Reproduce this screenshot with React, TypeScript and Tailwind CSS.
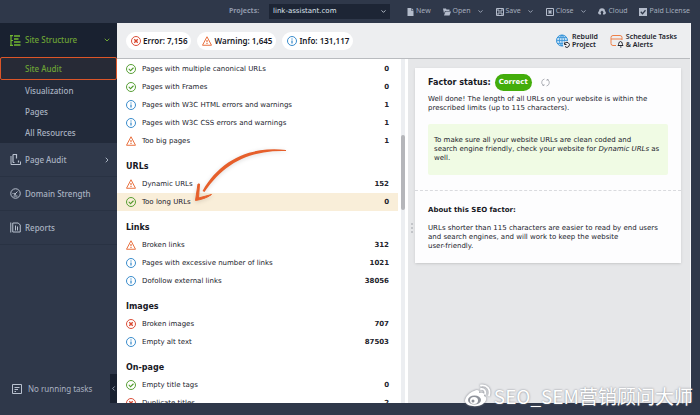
import React from "react";
import { ChevronDown, ChevronLeft, ChevronRight } from "lucide-react";

type Status = "ok" | "info" | "warning" | "error";

function StatusIcon({ status, size = 10 }: { status: Status; size?: number }) {
  if (status === "warning") {
    return (
      <svg width={size} height={size} viewBox="0 0 20 20" fill="none" stroke="#e8703f" strokeWidth="2" strokeLinejoin="round" className="shrink-0">
        <path d="M10 1.500 19 18.500H1Z" />
        <path d="M10 8v4.500M10 14v2" strokeWidth="2.400" />
      </svg>
    );
  }
  const color = status === "ok" ? "#4f9a2a" : status === "info" ? "#2f86c8" : "#d9472f";
  return (
    <svg width={size} height={size} viewBox="0 0 20 20" fill="none" stroke={color} strokeWidth="1.900" className="shrink-0">
      <circle cx="10" cy="10" r="9" />
      {status === "ok" && <path d="m5.500 9.500 3.500 4 6-6" strokeWidth="2.200" />}
      {status === "info" && <path d="M10 9v6M10 5v2.200" strokeWidth="2.400" />}
      {status === "error" && <path d="m6.500 6.500 7 7M13.500 6.500l-7 7" strokeWidth="2.800" />}
    </svg>
  );
}

type Row = { status: Status; label: string; count: string; selected?: boolean };
type Group = { title?: string; rows: Row[] };

const groups: Group[] = [
  {
    rows: [
      { status: "ok", label: "Pages with multiple canonical URLs", count: "0" },
      { status: "ok", label: "Pages with Frames", count: "0" },
      { status: "info", label: "Pages with W3C HTML errors and warnings", count: "1" },
      { status: "info", label: "Pages with W3C CSS errors and warnings", count: "1" },
      { status: "warning", label: "Too big pages", count: "1" },
    ],
  },
  {
    title: "URLs",
    rows: [
      { status: "warning", label: "Dynamic URLs", count: "152" },
      { status: "ok", label: "Too long URLs", count: "0", selected: true },
    ],
  },
  {
    title: "Links",
    rows: [
      { status: "warning", label: "Broken links", count: "312" },
      { status: "info", label: "Pages with excessive number of links", count: "1021" },
      { status: "info", label: "Dofollow external links", count: "38056" },
    ],
  },
  {
    title: "Images",
    rows: [
      { status: "error", label: "Broken images", count: "707" },
      { status: "info", label: "Empty alt text", count: "87503" },
    ],
  },
  {
    title: "On-page",
    rows: [
      { status: "ok", label: "Empty title tags", count: "0" },
      { status: "error", label: "Duplicate titles", count: "2" },
    ],
  },
];

function FileIcon() {
  return (
    <svg width="7" height="8" viewBox="0 0 14 16" fill="#b4bccb" className="shrink-0">
      <path d="M1 0h7v5h5v11H1Z" />
      <path d="m9 0 4 4H9Z" />
    </svg>
  );
}

function FolderIcon() {
  return (
    <svg width="8" height="8" viewBox="0 0 16 16" fill="#b4bccb" className="shrink-0">
      <path d="M0 1h6l1 2h6v3H4L2 11Z" />
      <path d="M5 7h11l-3 8H2Z" />
    </svg>
  );
}

function SaveIcon() {
  return (
    <svg width="8" height="8" viewBox="0 0 16 16" fill="none" stroke="#b4bccb" strokeWidth="2" className="shrink-0">
      <path d="M1 1h14v14H1ZM4 1v5h8V1M4 15v-5h8v5" />
    </svg>
  );
}

function CloseIcon() {
  return (
    <svg width="8" height="8" viewBox="0 0 16 16" fill="none" stroke="#b4bccb" strokeWidth="2" className="shrink-0">
      <path d="M1 1h14v14H1Z" />
      <path d="m5 5 6 6M11 5l-6 6" strokeWidth="3" />
    </svg>
  );
}

function CloudIcon() {
  return (
    <svg width="8" height="7" viewBox="0 0 16 14" fill="#b4bccb" className="shrink-0">
      <path d="M3 13a3.500 3.500 0 0 1-1-6.500A6 6 0 0 1 14 6.500 3.500 3.500 0 0 1 13 13h-3V9h2L8 5 4 9h2v4Z" />
    </svg>
  );
}

function LicenseIcon() {
  return (
    <svg width="8" height="8" viewBox="0 0 16 16" className="shrink-0">
      <path d="M0 0h16v16H0Z" fill="#b4bccb" />
      <path d="m3.500 7.500 3.500 4 6-7" fill="none" stroke="#2f384a" strokeWidth="2.400" />
    </svg>
  );
}

function ToolButton({ icon, label, menu }: { icon: React.ReactNode; label: string; menu?: boolean }) {
  return (
    <button type="button" className="flex items-center gap-[2px] whitespace-nowrap font-['Noto_Sans',sans-serif] text-[7px] text-[#a4adbd]">
      {icon}
      <span>{label}</span>
      {menu && <ChevronDown size={7} strokeWidth={3} className="ml-1" />}
    </button>
  );
}

function TopBar() {
  return (
    <header className="flex h-[23px] shrink-0 items-center bg-[#2f384a] pr-[10px]">
      <label htmlFor="project" className="ml-[229px] w-10 whitespace-nowrap font-['Noto_Sans',sans-serif] text-[7px] font-bold text-[#8f99ab]">
        Projects:
      </label>
      <div className="grid w-[121px] items-center">
        <select id="project" className="col-start-1 row-start-1 h-[15px] appearance-none bg-[#1d2535] pl-1 text-[7px] text-[#dfe4ec]">
          <option>link-assistant.com</option>
        </select>
        <ChevronDown size={7} strokeWidth={3} className="pointer-events-none col-start-1 row-start-1 mr-[3px] justify-self-end text-[#c3cad6]" />
      </div>
      <nav className="ml-[17px] flex flex-1 items-center justify-between">
        <ToolButton icon={<FileIcon />} label="New" />
        <ToolButton icon={<FolderIcon />} label="Open" menu />
        <ToolButton icon={<SaveIcon />} label="Save" menu />
        <ToolButton icon={<CloseIcon />} label="Close" menu />
        <ToolButton icon={<CloudIcon />} label="Cloud" />
        <ToolButton icon={<LicenseIcon />} label="Paid License" />
      </nav>
    </header>
  );
}

const subPages = ["Visualization", "Pages", "All Resources"];

function StructureIcon() {
  return (
    <svg width="11" height="11" viewBox="0 0 22 22" fill="none" stroke="#72b831" strokeWidth="2.400" className="shrink-0">
      <path d="M0 1.200h6M2 1v19.800M0 20.800h6M2 11h4" />
      <path d="M8 2h12M8 8h9M8 14h13M8 20h13" strokeWidth="3" />
    </svg>
  );
}

function PageAuditIcon() {
  return (
    <svg width="11" height="11" viewBox="0 0 22 22" fill="none" stroke="#b9c1cf" strokeWidth="2" className="shrink-0">
      <path d="M2 4v17h19v-6" />
      <path d="M6 1h7v8M6 1v16M6 17h3M17 13v4" strokeWidth="2.400" />
    </svg>
  );
}

function StrengthIcon() {
  return (
    <svg width="11" height="11" viewBox="0 0 22 22" fill="none" stroke="#b9c1cf" strokeWidth="2" className="shrink-0">
      <circle cx="11" cy="11" r="9.500" />
      <path d="m10 12 5-5M5 11h2M7 16h8" />
      <circle cx="10" cy="12" r="1.500" />
    </svg>
  );
}

function ReportsIcon() {
  return (
    <svg width="11" height="11" viewBox="0 0 22 22" fill="none" stroke="#b9c1cf" strokeWidth="2" className="shrink-0">
      <path d="M1.500 1v20M5.500 2h11l4 4v14h-15Z" />
      <path d="M11 7v10M15 9v8" />
    </svg>
  );
}

function SideItem({ icon, label, more }: { icon: React.ReactNode; label: string; more?: boolean }) {
  return (
    <button type="button" className="flex h-[34px] w-full items-center gap-1 border-b border-[#293243] pl-[10px] pr-[6px] text-left font-medium text-[#a9b2c1]">
      {icon}
      <span className="flex-1 whitespace-nowrap">{label}</span>
      {more && <ChevronRight size={8} strokeWidth={3} />}
    </button>
  );
}

function Sidebar() {
  return (
    <aside className="flex w-[117px] shrink-0 flex-col bg-[#2f384a] font-['Noto_Sans',sans-serif] text-[8px]">
      <div className="bg-[#222a3a]">
        <button type="button" className="flex h-[34px] w-full items-center gap-1 bg-[#192130] pl-[10px] pr-[6px] text-left font-medium text-[#6da335]">
          <StructureIcon />
          <span className="flex-1 whitespace-nowrap">Site Structure</span>
          <ChevronDown size={8} strokeWidth={3} />
        </button>
        <a href="#audit" className="flex h-[23px] items-center rounded-[2px] border border-[#dc5528] bg-[#272a36] pl-6 font-medium text-[#6da335]">
          Site Audit
        </a>
        {subPages.map((page) => (
          <a key={page} href="#pages" className="flex h-[21px] items-center pl-[25px] font-medium text-[#a9b2c1]">
            {page}
          </a>
        ))}
      </div>
      <SideItem icon={<PageAuditIcon />} label="Page Audit" more />
      <SideItem icon={<StrengthIcon />} label="Domain Strength" />
      <SideItem icon={<ReportsIcon />} label="Reports" />
      <div className="mt-auto flex h-[29px] items-center pl-3 text-[#a9b2c1]">
        <svg width="10" height="10" viewBox="0 0 20 20" fill="none" stroke="#b9c1cf" strokeWidth="2" className="shrink-0">
          <path d="M1 1h18v18H1ZM5 7h10M5 11h7M5 15h3" />
        </svg>
        <span className="ml-[6px] flex-1 whitespace-nowrap">No running tasks</span>
        <button type="button" aria-label="Collapse sidebar" className="flex h-full w-[7px] items-center justify-center bg-[#192130]">
          <ChevronLeft size={7} strokeWidth={3} />
        </button>
      </div>
    </aside>
  );
}

function Pill({ status, label }: { status: Status; label: string }) {
  return (
    <button type="button" className="flex h-[18px] items-center gap-[2px] whitespace-nowrap rounded-full bg-white pl-[5px] pr-1 font-['Noto_Sans',sans-serif] text-[8px] font-semibold text-[#17181f]">
      <StatusIcon status={status} />
      {label}
    </button>
  );
}

function RebuildIcon() {
  return (
    <svg width="14" height="14" viewBox="0 0 28 28" fill="none" className="shrink-0">
      <circle cx="12" cy="13" r="11" stroke="#2f8fd6" strokeWidth="2" fill="#c4e0f5" />
      <path d="M12 2v22M1 13h22M3 7h18M3 19h18M12 2c-7 6-7 16 0 22M12 2c7 6 7 16 0 22" stroke="#2f8fd6" strokeWidth="1.500" />
      <circle cx="21" cy="21" r="7" fill="#eeeff1" />
      <path d="M17 17v4h4M17 20a5 5 0 1 1 1 5" stroke="#22242c" strokeWidth="2" />
    </svg>
  );
}

function ScheduleIcon() {
  return (
    <svg width="14" height="14" viewBox="0 0 28 28" fill="none" className="shrink-0">
      <path d="M12 23H6a4 4 0 0 1-4-4V7a4 4 0 0 1 4-4h14a4 4 0 0 1 4 4v5M2 10h22" stroke="#ee8048" strokeWidth="2" />
      <path d="M16 23c2-2 1-8 5-8s3 6 5 8Z" stroke="#22242c" strokeWidth="2" />
      <path d="M20 26h3" stroke="#22242c" strokeWidth="2" />
    </svg>
  );
}

function SummaryBar() {
  return (
    <div className="flex h-9 shrink-0 items-center border-b border-[#b9bbbf] bg-[#edeef0] pl-[9px] pr-[13px]">
      <div className="flex gap-[6px]">
        <Pill status="error" label="Error: 7,156" />
        <Pill status="warning" label="Warning: 1,645" />
        <Pill status="info" label="Info: 131,117" />
      </div>
      <div className="ml-auto flex gap-3 whitespace-nowrap font-['Noto_Sans',sans-serif] text-[7px] font-semibold leading-[8px] text-[#22242c]">
        <button type="button" className="flex items-center gap-[2px] text-left">
          <RebuildIcon />
          <span>Rebuild<br />Project</span>
        </button>
        <button type="button" className="flex items-center gap-[2px] text-left">
          <ScheduleIcon />
          <span>Schedule Tasks<br />&amp; Alerts</span>
        </button>
      </div>
    </div>
  );
}

function FactorList() {
  return (
    <section className="flex w-[291px] shrink-0 overflow-hidden bg-white">
      <div className="min-w-0 flex-1 pt-px">
        {groups.map((group, i) => (
          <div key={i}>
            {group.title && (
              <h2 className="flex h-[25px] items-end pb-[2px] pl-[9px] text-[8px] font-bold leading-[12px] text-[#17181f]">{group.title}</h2>
            )}
            <ul className="text-[7px] text-[#22232c]">
              {group.rows.map((row) => (
                <li key={row.label} className={row.selected ? "flex h-[18px] items-center bg-[#f9eed9] px-[9px]" : "flex h-[18px] items-center px-[9px]"}>
                  <StatusIcon status={row.status} />
                  <span className="ml-[6px] flex-1 whitespace-nowrap">{row.label}</span>
                  <span className="font-bold">{row.count}</span>
                </li>
              ))}
            </ul>
          </div>
        ))}
      </div>
      <div className="mx-[3px] w-1 bg-[#eceef1] pt-[76px]">
        <div className="h-[75px] rounded-full bg-[#b5b6ba]" />
      </div>
    </section>
  );
}

function FactorDetails() {
  return (
    <section className="flex min-w-0 flex-1 bg-[#e6e7e9]">
      <div className="flex w-[7px] shrink-0 flex-col items-center gap-[2px] pt-[164px]">
        <span className="size-[2px] bg-[#c3c5c9]" />
        <span className="size-[2px] bg-[#c3c5c9]" />
        <span className="size-[2px] bg-[#c3c5c9]" />
      </div>
      <div className="mr-[9px] mt-[9px] flex-1 self-start bg-[#fdfdfe] text-[7px] leading-[9px] text-[#22232c] shadow-sm">
        <div className="border-b border-dashed border-[#d9dade] px-[13px] pb-[15px] pt-[6px]">
          <div className="flex items-center">
            <h1 className="text-[8px] font-bold text-[#17181f]">Factor status:</h1>
            <span className="ml-1 flex h-[17px] items-center rounded-full bg-[#43ad0b] px-1 font-bold text-white">Correct</span>
            <button type="button" aria-label="Refresh" className="ml-[9px]">
              <svg width="9" height="9" viewBox="0 0 18 18" fill="none" stroke="#9b9ea5" strokeWidth="1.500">
                <path d="M7 2a7 7 0 0 0-2 13M3 15h3v-3M11 16a7 7 0 0 0 2-13M15 3h-3v3" />
              </svg>
            </button>
          </div>
          <p className="mt-1">
            Well done! The length of all URLs on your website is within the prescribed limits (up to 115 characters).
          </p>
          <p className="mt-[11px] rounded-[2px] bg-[#f0fbe4] px-[6px] py-3">
            To make sure all your website URLs are clean coded and
            <br />
            search engine friendly, check your website for <em>Dynamic URLs</em> as well.
          </p>
        </div>
        <div className="px-[13px] pb-3 pt-[15px]">
          <h2 className="font-bold text-[#17181f]">About this SEO factor:</h2>
          <p className="mt-[9px] pr-[6px]">
            URLs shorter than 115 characters are easier to read by end users and search engines, and will work to keep the website{" "}
            <span className="whitespace-nowrap">user-friendly.</span>
          </p>
        </div>
      </div>
    </section>
  );
}

function Arrow() {
  return (
    <svg width="100" height="60" viewBox="0 0 100 60" fill="#e65f2b" className="pointer-events-none absolute left-[190px] top-[145px] drop-shadow-sm">
      <path d="M96 5C60 1 30 15 12.500 46L14.500 47C34 18 60 5 96 6Z" />
      <path d="M8 39 5.500 55.500C11 54.500 17 53 21.500 49.500L8.500 53 9.500 39Z" stroke="#e65f2b" strokeWidth="1" strokeLinejoin="round" />
    </svg>
  );
}

function Watermark() {
  return (
    <div className="pointer-events-none absolute bottom-[7px] right-[7px] flex items-center gap-[3px] whitespace-nowrap font-['Noto_Sans_CJK_SC',sans-serif] text-[19px] leading-[24px] text-white [text-shadow:0_0_2px_#777b84]">
      <svg width="27" height="24" viewBox="0 0 27 24" className="shrink-0 drop-shadow-[0_0_1px_#777b84]">
        <path d="M10 7c3-2 6-1 5 2 4-1 6 0 5 3 3 1 3 4 0 7-5 5-18 4-19-2C1 13 6 8 10 7Z" fill="#fff" />
        <ellipse cx="10.500" cy="16" rx="6.500" ry="4.500" fill="#8e929a" />
        <ellipse cx="10" cy="16.500" rx="4" ry="3.500" fill="#fff" />
        <circle cx="9" cy="17" r="1.500" fill="#8e929a" />
        <path d="M17 5c3-.5 5 2 4 5M17 1.500c6-1 10 4 8 10" fill="none" stroke="#fff" strokeWidth="1.800" strokeLinecap="round" />
      </svg>
      SEO_SEM营销顾问大师
    </div>
  );
}

export default function App() {
  return (
    <div className="relative flex h-screen flex-col overflow-hidden bg-[#2f384a] font-['DejaVu_Sans',sans-serif]">
      <TopBar />
      <div className="flex min-h-0 flex-1 pb-3 pr-[9px]">
        <Sidebar />
        <main className="flex min-w-0 flex-1 flex-col border-r border-[#f4f5f7] bg-white">
          <SummaryBar />
          <div className="flex min-h-0 flex-1">
            <FactorList />
            <FactorDetails />
          </div>
        </main>
      </div>
      <Arrow />
      <Watermark />
    </div>
  );
}
